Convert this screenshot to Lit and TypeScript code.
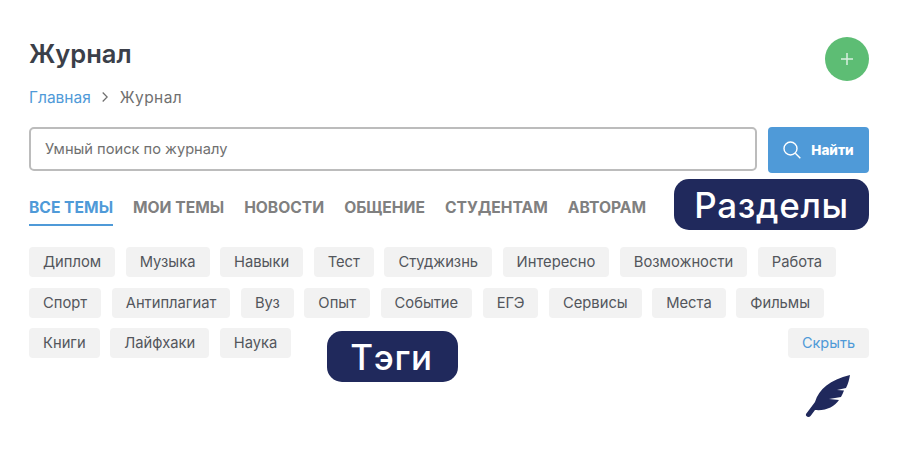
import { html, css, LitElement } from 'lit';
import { customElement } from 'lit/decorators.js';

const TABS = ['Все темы', 'Мои темы', 'Новости', 'Общение', 'Студентам', 'Авторам'];

const TAGS = [
  ['Диплом', 'Музыка', 'Навыки', 'Тест', 'Студжизнь', 'Интересно', 'Возможности', 'Работа'],
  ['Спорт', 'Антиплагиат', 'Вуз', 'Опыт', 'Событие', 'ЕГЭ', 'Сервисы', 'Места', 'Фильмы'],
  ['Книги', 'Лайфхаки', 'Наука'],
];

@customElement('app-root')
export class AppRoot extends LitElement {
  static styles = css`
    :host {
      display: block;
      position: relative;
      width: 900px;
      height: 450px;
      background: #fff;
      font-family: 'Inter', 'Roboto', sans-serif;
      overflow: hidden;
    }

    .page {
      box-sizing: border-box;
      height: 100%;
      padding: 37px 31px 0 29px;
    }

    .head {
      display: flex;
      justify-content: space-between;
      align-items: flex-start;
      height: 44px;
    }

    h1 {
      margin: 2px 0 0;
      font-size: 25.5px;
      line-height: 30px;
      font-weight: 600;
      color: #3b3f49;
    }

    .add {
      display: flex;
      align-items: center;
      justify-content: center;
      width: 44px;
      height: 44px;
      border-radius: 50%;
      background: #5dbd74;
    }

    .crumbs {
      display: flex;
      align-items: center;
      gap: 11.5px;
      margin-top: 6px;
      height: 20px;
      font-size: 15.5px;
      color: #707070;
    }

    .crumbs a {
      color: #4f9ad8;
    }

    .crumbs .here {
      letter-spacing: 0.4px;
    }

    .search {
      display: flex;
      align-items: flex-start;
      gap: 11px;
      margin-top: 20px;
    }

    .field {
      flex: 1;
      box-sizing: border-box;
      height: 44px;
      padding: 0 14px;
      border: 2px solid #bcbcbc;
      border-radius: 5px;
      font-size: 14.65px;
      line-height: 40px;
      color: #707070;
    }

    .find {
      display: flex;
      align-items: center;
      justify-content: center;
      gap: 10px;
      width: 101px;
      height: 46px;
      border-radius: 4px;
      background: #4f9ad8;
      color: #fff;
      font-size: 13.5px;
      font-weight: 800;
    }

    .tabs {
      display: flex;
      gap: 20px;
      margin-top: 25px;
    }

    .tab {
      height: 28px;
      font-size: 15.65px;
      line-height: 20px;
      font-weight: 700;
      color: #808080;
      text-transform: uppercase;
      white-space: nowrap;
    }

    .tab.active {
      box-sizing: border-box;
      color: #4f9ad8;
      border-bottom: 2px solid #4f9ad8;
    }

    .tags {
      display: flex;
      flex-direction: column;
      gap: 10.5px;
      margin-top: 21px;
    }

    .row {
      display: flex;
      gap: 10.5px;
    }

    .chip {
      height: 30px;
      padding: 0 14px;
      border-radius: 4px;
      background: #f2f2f2;
      font-size: 14.75px;
      line-height: 30px;
      color: #53565c;
      white-space: nowrap;
    }

    .hide {
      margin-left: auto;
      color: #4f9ad8;
      font-size: 14.5px;
    }

    .label {
      position: absolute;
      display: flex;
      align-items: center;
      justify-content: center;
      height: 51px;
      border-radius: 15px;
      background: #20295c;
      color: #fff;
      font-size: 35px;
      font-weight: 450;
      letter-spacing: 0.7px;
    }

    .label.sections {
      left: 674px;
      top: 179px;
      width: 195px;
    }

    .label.topics {
      left: 327px;
      top: 331px;
      width: 129px;
      padding-right: 2px;
    }

    .feather {
      position: absolute;
      left: 805px;
      top: 375px;
    }
  `;

  render() {
    return html`
      <div class="page">
        <div class="head">
          <h1>Журнал</h1>
          <div class="add">
            <svg width="14" height="14" viewBox="0 0 14 14">
              <path d="M7 1v12M1 7h12" stroke="#d9f0df" stroke-width="1.5" fill="none" />
            </svg>
          </div>
        </div>
        <div class="crumbs">
          <a>Главная</a>
          <svg width="6" height="12" viewBox="0 0 6 12">
            <path d="M.7 1.500 5.200 6 .7 10.500" stroke="#707070" stroke-width="1.3" fill="none" />
          </svg>
          <span class="here">Журнал</span>
        </div>
        <div class="search">
          <div class="field">Умный поиск по журналу</div>
          <div class="find">
            <svg width="18" height="18" viewBox="0 0 18 18">
              <circle cx="7.500" cy="7.500" r="6.500" stroke="#fff" stroke-width="1.400" fill="none" />
              <path d="m12.300 12.300 5 5" stroke="#fff" stroke-width="1.400" fill="none" />
            </svg>
            <span>Найти</span>
          </div>
        </div>
        <div class="tabs">
          ${TABS.map((t, i) => html`<div class="tab ${i === 0 ? 'active' : ''}">${t}</div>`)}
        </div>
        <div class="tags">
          ${TAGS.map(
            (row, i) => html`
              <div class="row">
                ${row.map(t => html`<div class="chip">${t}</div>`)}
                ${i === 2 ? html`<div class="chip hide">Скрыть</div>` : ''}
              </div>
            `
          )}
        </div>
      </div>
      <div class="label sections">Разделы</div>
      <div class="label topics">Тэги</div>
      <svg class="feather" width="46" height="43" viewBox="0 0 46 43">
        <path
          fill="#20295c"
          d="M45 0C44.300 4.500 43 9 41 13L32 15l7 .5c-.8 2.300-1.800 4.500-3 6.500L24 24l10 1c-5 7-13 11-24 10L5.500 41C4 43 0 41.500 1 39L10 27C14 14 25 5 45 0Z"
        />
      </svg>
    `;
  }
}
